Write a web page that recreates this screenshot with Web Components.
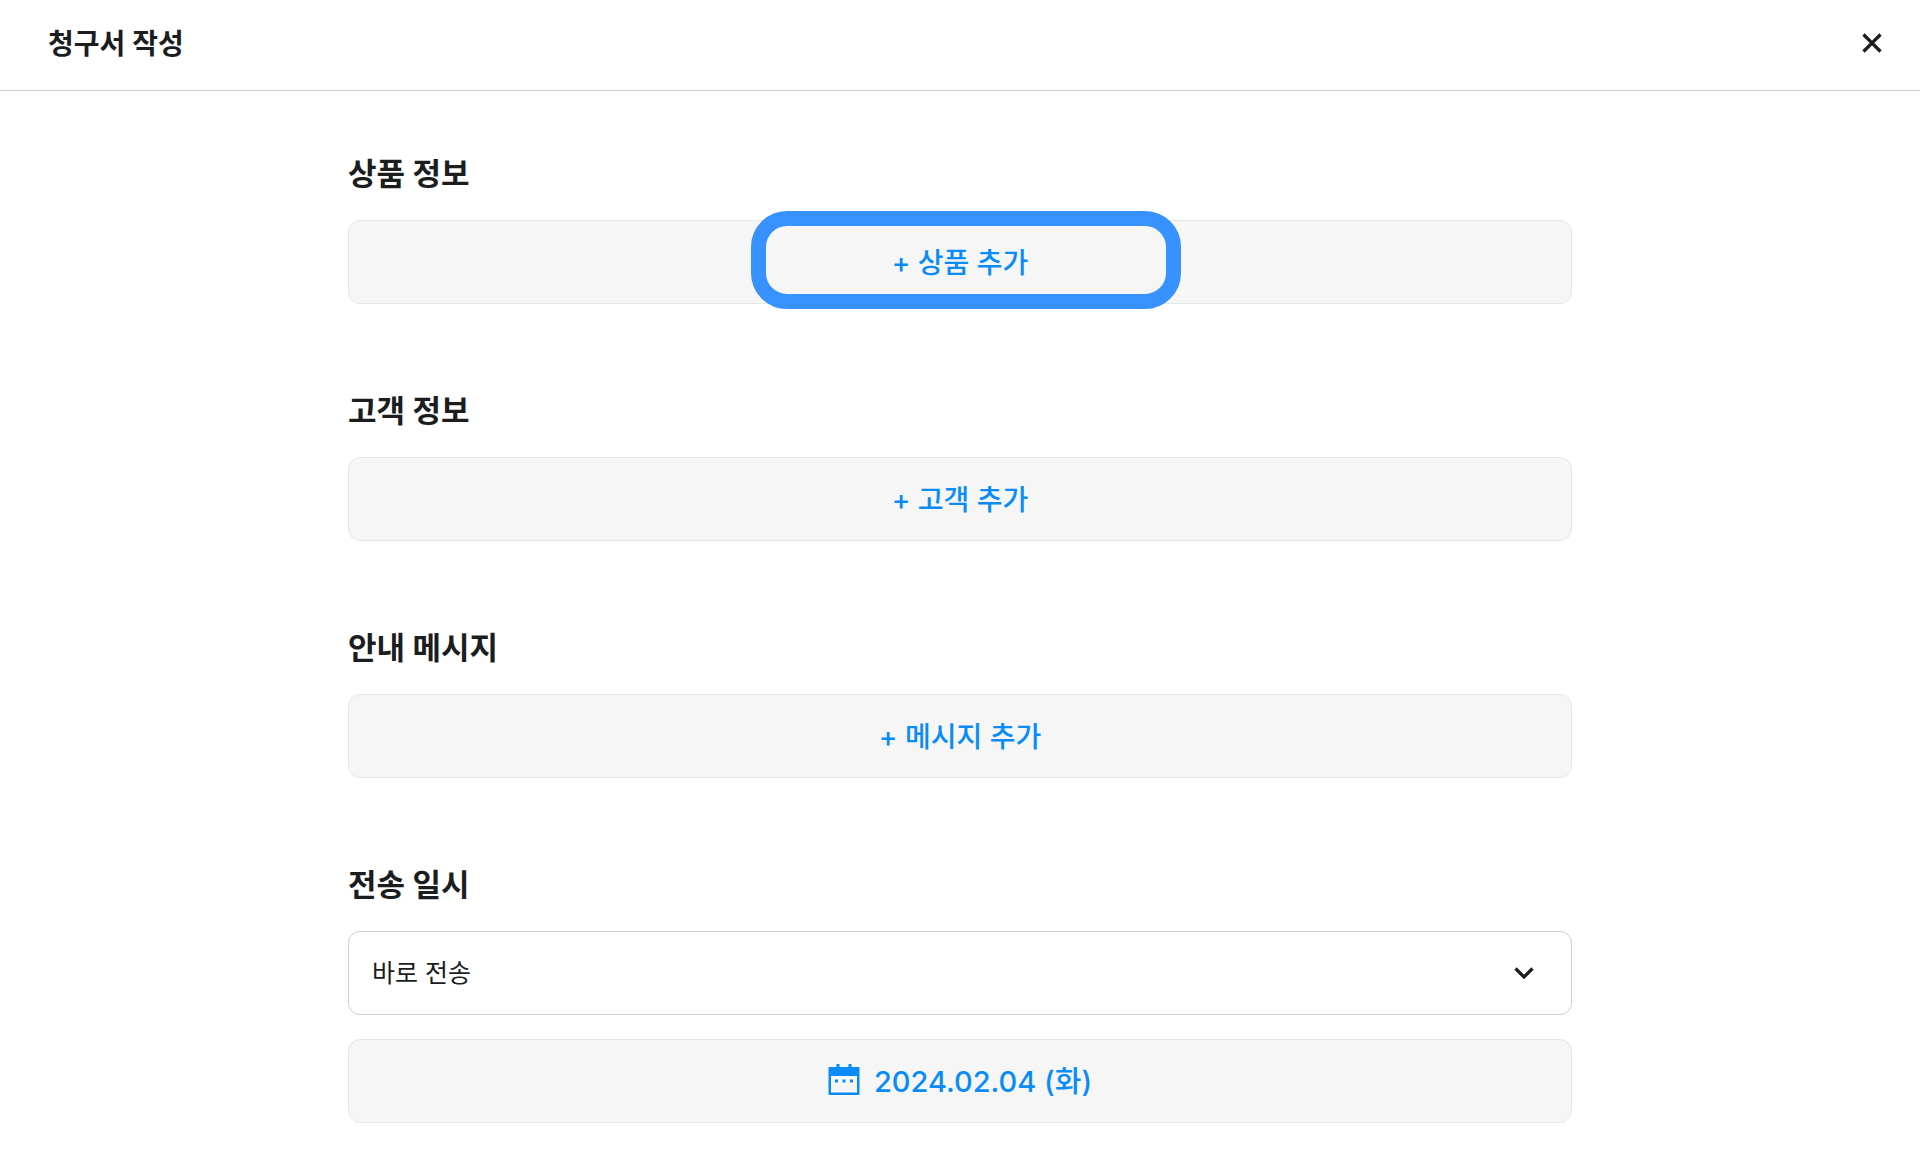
<!DOCTYPE html>
<html lang="ko">
<head>
<meta charset="utf-8">
<meta name="viewport" content="width=device-width, initial-scale=1">
<title>청구서 작성</title>
<style>
  body {
    margin: 0;
    background: #fff;
    color: #1b1d1f;
    font-family: Inter, "Noto Sans CJK KR", sans-serif;
    --accent: #0a8cf8;
    --ring: #3792ff;
    --line: #cecece;
    --fill: #f6f6f6;
    --fill-line: #e7e7e7;
  }
</style>
</head>
<body>
<invoice-page></invoice-page>

<template id="page-header-template">
  <style>
    :host { display: block; border-bottom: 1px solid var(--line); }
    header { display: flex; align-items: flex-start; justify-content: space-between; padding: 24px 32px 26px 48px; }
    h1 { margin: 0; font-size: 28px; line-height: 40px; font-weight: 600; }
    button { display: grid; place-items: center; width: 32px; height: 38px; padding: 0; border: 0; background: none; color: inherit; cursor: pointer; }
    svg { width: 20px; height: 20px; }
  </style>
  <header>
    <h1><slot></slot></h1>
    <button type="button" aria-label="닫기">
      <svg viewBox="0 0 20 20" fill="none" stroke="currentColor" stroke-width="3.200"><path d="M1.500 1.500l17 17M18.500 1.500l-17 17"/></svg>
    </button>
  </header>
</template>

<template id="form-section-template">
  <style>
    :host { display: block; }
    section { display: flex; flex-direction: column; gap: 24px; }
    h2 { margin: 0; font-size: 31px; line-height: 44px; font-weight: 700; }
  </style>
  <section>
    <h2><slot name="heading"></slot></h2>
    <slot></slot>
  </section>
</template>

<template id="add-button-template">
  <style>
    :host { display: block; position: relative; }
    button {
      display: flex; align-items: center; justify-content: center; gap: 14px;
      box-sizing: border-box; width: 100%; height: 84px; padding: 2px 24px 0;
      border: 1px solid var(--fill-line); border-radius: 12px;
      background: var(--fill); color: var(--accent);
      font: 500 28px/40px Inter, "Noto Sans CJK KR", sans-serif; cursor: pointer;
    }
    :host([date]) button { font-size: 29px; }
    :host([highlighted])::after {
      content: ""; position: absolute; box-sizing: border-box;
      left: calc(50% - 209px); top: -9px; width: 430px; height: 98px;
      border: 15px solid var(--ring); border-radius: 36px; pointer-events: none;
    }
    ::slotted(svg) { width: 32px; height: 32px; flex: none; margin-bottom: 4px; }
  </style>
  <button type="button"><slot name="icon"></slot><span><slot></slot></span></button>
</template>

<template id="send-select-template">
  <style>
    :host { display: grid; align-items: center; }
    select, svg { grid-area: 1 / 1; }
    select {
      appearance: none; box-sizing: border-box; width: 100%; height: 84px; padding: 0 72px 0 23px;
      border: 1px solid var(--line); border-radius: 12px; background: #fff; color: inherit;
      font: 400 25px/36px Inter, "Noto Sans CJK KR", sans-serif;
    }
    svg { justify-self: end; width: 20px; height: 20px; margin-right: 38px; pointer-events: none; }
  </style>
  <select aria-label="전송 일시"><option>바로 전송</option></select>
  <svg viewBox="0 0 20 20" fill="none" stroke="currentColor" stroke-width="3.200"><path d="M1.500 5.500L10 14l8.500-8.500"/></svg>
</template>

<template id="invoice-page-template">
  <style>
    :host { display: block; }
    main { display: flex; flex-direction: column; gap: 85px; box-sizing: border-box; max-width: 1272px; margin: 0 auto; padding: 61px 24px 48px; }
  </style>
  <page-header>청구서 작성</page-header>
  <main>
    <form-section><span slot="heading">상품 정보</span><add-button highlighted>+ 상품 추가</add-button></form-section>
    <form-section><span slot="heading">고객 정보</span><add-button>+ 고객 추가</add-button></form-section>
    <form-section><span slot="heading">안내 메시지</span><add-button>+ 메시지 추가</add-button></form-section>
    <form-section>
      <span slot="heading">전송 일시</span>
      <send-select></send-select>
      <add-button date>
        <svg slot="icon" viewBox="0 0 32 32" fill="currentColor" aria-hidden="true">
          <path fill-rule="evenodd" d="M8.500 0h3v3h9V0h3v3H30.500a1 1 0 0 1 1 1v26a1 1 0 0 1-1 1H1.500a1 1 0 0 1-1-1V4a1 1 0 0 1 1-1h7zM3 12v16.500h26V12z"/>
          <path d="M7 15.500h3v3H7zM14.500 15.500h3v3h-3zM22 15.500h3v3h-3z"/>
        </svg>2024.02.04 (화)</add-button>
    </form-section>
  </main>
</template>

<script>
  class TemplateElement extends HTMLElement {
    constructor() {
      super();
      const template = document.getElementById(this.localName + "-template");
      this.attachShadow({ mode: "open" }).append(template.content.cloneNode(true));
    }
  }
  for (const name of ["page-header", "form-section", "add-button", "send-select", "invoice-page"]) {
    customElements.define(name, class extends TemplateElement {});
  }
</script>
</body>
</html>
